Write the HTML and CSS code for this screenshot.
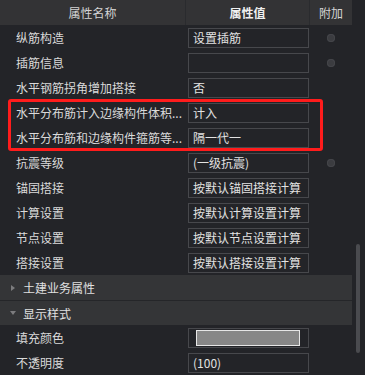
FILE: index.html
```html
<!DOCTYPE html>
<html lang="zh">
<head>
<meta charset="utf-8">
<title>属性</title>
<link rel="stylesheet" href="styles.css">
</head>
<body>
<div class="panel">
  <div class="table">
    <div class="row head">
      <div class="hcell">属性名称</div>
      <div class="hcell bold">属性值</div>
      <div class="hcell">附加</div>
    </div>
    <div class="row"><div class="name">纵筋构造</div><div class="val"><div class="box">设置插筋</div></div><div class="extra"><span class="dot"></span></div></div>
    <div class="row"><div class="name">插筋信息</div><div class="val"><div class="box"></div></div><div class="extra"><span class="dot"></span></div></div>
    <div class="row"><div class="name">水平钢筋拐角增加搭接</div><div class="val"><div class="box">否</div></div><div class="extra"></div></div>
    <div class="highlight">
      <div class="row"><div class="name">水平分布筋计入边缘构件体积...</div><div class="val"><div class="box">计入</div></div><div class="extra"></div></div>
      <div class="row"><div class="name">水平分布筋和边缘构件箍筋等...</div><div class="val"><div class="box">隔一代一</div></div><div class="extra"></div></div>
    </div>
    <div class="row"><div class="name">抗震等级</div><div class="val"><div class="box">(一级抗震)</div></div><div class="extra"><span class="dot"></span></div></div>
    <div class="row"><div class="name">锚固搭接</div><div class="val"><div class="box">按默认锚固搭接计算</div></div><div class="extra"></div></div>
    <div class="row"><div class="name">计算设置</div><div class="val"><div class="box">按默认计算设置计算</div></div><div class="extra"></div></div>
    <div class="row"><div class="name">节点设置</div><div class="val"><div class="box">按默认节点设置计算</div></div><div class="extra"></div></div>
    <div class="row"><div class="name">搭接设置</div><div class="val"><div class="box">按默认搭接设置计算</div></div><div class="extra"></div></div>
    <div class="group"><span class="tri-right"></span><span class="gtext">土建业务属性</span></div>
    <div class="group"><span class="tri-down"></span><span class="gtext">显示样式</span></div>
    <div class="row"><div class="name">填充颜色</div><div class="val"><div class="box swatch-box"><div class="swatch"></div></div></div><div class="extra"></div></div>
    <div class="row"><div class="name">不透明度</div><div class="val"><div class="box">(100)</div></div><div class="extra"></div></div>
  </div>
  <div class="scroll"><div class="thumb"></div></div>
</div>
</body>
</html>
```
FILE: styles.css
```css
html, body {
  margin: 0;
  padding: 0;
  background: #232428;
  overflow: hidden;
}
body {
  font-family: "Noto Sans CJK SC", "Noto Sans", sans-serif;
  font-size: 12px;
  color: #dadada;
}
.panel {
  display: flex;
  width: 365px;
  height: 375px;
}
.table {
  width: 352px;
  flex: none;
}
.row {
  display: grid;
  grid-template-columns: 186px 124px 42px;
  height: 25px;
}
.head {
  background: #333335;
}
.hcell {
  text-align: center;
  line-height: 25px;
  color: #d4d4d4;
  border-right: 1px solid #2a2b2e;
}
.hcell:last-child {
  border-right: none;
}
.bold {
  font-weight: bold;
  color: #f0f0f0;
}
.name {
  padding-left: 16px;
  line-height: 25px;
  white-space: nowrap;
  overflow: hidden;
}
.val {
  padding: 3px 1px 0 2px;
}
.box {
  box-sizing: border-box;
  height: 20px;
  width: 121px;
  border: 1px solid #47484c;
  padding-left: 4px;
  line-height: 18px;
  white-space: nowrap;
  overflow: hidden;
  color: #e2e2e2;
}
.extra {
  display: flex;
  align-items: center;
  justify-content: center;
}
.dot {
  width: 8px;
  height: 8px;
  border-radius: 50%;
  background: #3b3c40;
  box-shadow: inset 0 0 0 1px #45464a;
}
.highlight {
  position: relative;
}
.highlight::after {
  content: "";
  position: absolute;
  top: -1px;
  left: 8px;
  width: 315px;
  height: 52px;
  box-sizing: border-box;
  border: 3px solid #ff1c1c;
  border-radius: 3px;
}
.group {
  box-sizing: border-box;
  height: 25px;
  background: #343537;
  display: flex;
  align-items: center;
  padding-left: 10px;
}
.group + .group {
  border-top: 1px solid #252629;
}
.gtext {
  margin-left: 7px;
  color: #e0e0e0;
}
.tri-right {
  width: 0;
  height: 0;
  border-top: 3px solid transparent;
  border-bottom: 3px solid transparent;
  border-left: 4px solid #7c7c7e;
  margin-left: 1px;
  margin-right: 1px;
}
.tri-down {
  width: 0;
  height: 0;
  border-left: 3px solid transparent;
  border-right: 3px solid transparent;
  border-top: 4px solid #7c7c7e;
}
.swatch-box {
  padding: 1px 8px 1px 7px;
}
.swatch {
  box-sizing: border-box;
  height: 16px;
  background: #878787;
  border: 1px solid #e6e6e6;
}
.scroll {
  flex: 1;
}
.thumb {
  width: 4px;
  height: 109px;
  margin: 244px 0 0 4px;
  border-radius: 2px;
  background: #4a4b4f;
}
```
